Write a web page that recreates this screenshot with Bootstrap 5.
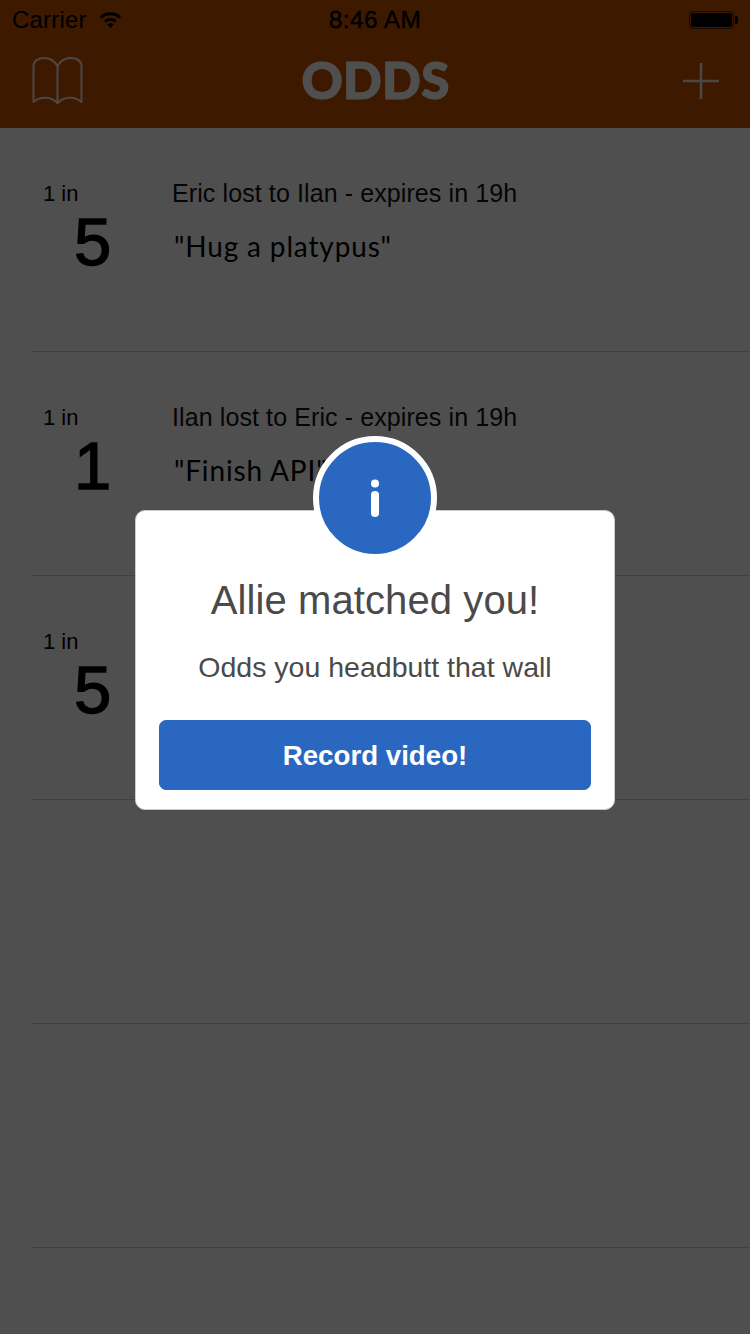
<!DOCTYPE html>
<html lang="en">
<head>
    <meta charset="UTF-8">
    <title>Odds</title>
    <link href="https://cdn.jsdelivr.net/npm/bootstrap@5.3.0/dist/css/bootstrap.min.css" rel="stylesheet">
    <style>
        html, body {
            height: 1334px;
            overflow: hidden;
        }

        body {
            background: #fff;
            color: #000;
            font-family: "Liberation Sans", Arial, sans-serif;
        }

        .app-header {
            height: 128px;
            background: #c55100;
            color: #fff;
        }

        .status-bar {
            height: 40px;
            padding: 0 11px 0 12px;
            font-size: 24px;
            line-height: 40px;
            letter-spacing: 0.2px;
        }

        .status-wifi {
            margin-left: 12px;
        }

        .status-time {
            font-size: 24.5px;
            letter-spacing: 0.4px;
            -webkit-text-stroke: 0.4px #000;
        }

        .title-bar {
            height: 88px;
            padding: 0 31px 7px 32px;
        }

        .title-side {
            width: 51px;
        }

        .app-title {
            margin-top: -2px;
            font-family: Lato, sans-serif;
            font-weight: 900;
            font-size: 51px;
            letter-spacing: 0.2px;
            line-height: 1;
            -webkit-text-stroke: 1.2px #fff;
        }

        .odds-row {
            height: 224px;
            margin-left: 32px;
            padding: 50px 0 0 11px;
            border-bottom: 1px solid #d0d0d0;
        }

        .odds-side {
            width: 129px;
        }

        .odds-in {
            font-size: 22px;
            line-height: 31px;
        }

        .odds-num {
            padding-left: 31px;
            font-size: 67px;
            font-weight: 400;
            line-height: 66px;
            -webkit-text-stroke: 1.4px #000;
        }

        .odds-who {
            font-size: 25px;
            line-height: 30px;
            letter-spacing: 0.1px;
            color: #111;
        }

        .odds-dare {
            margin-top: 20px;
            padding-left: 2px;
            font-family: Lato, sans-serif;
            font-size: 28px;
            line-height: 36px;
            letter-spacing: 0.85px;
        }

        .dim-layer {
            position: fixed;
            inset: 0;
            background: rgba(0, 0, 0, 0.69);
        }

        .match-box {
            position: absolute;
            left: 135px;
            top: 510px;
            width: 480px;
            height: 300px;
            padding: 63px 24px 0;
            background: #fff;
            border: 1px solid #ccc;
            border-radius: 10px;
            color: #4a4a4a;
            text-align: center;
        }

        .match-badge {
            position: absolute;
            left: 50%;
            top: -75px;
            width: 124px;
            height: 124px;
            margin-left: -62px;
            background: #2a67c0;
            border: 6px solid #fff;
            border-radius: 50%;
        }

        .match-title {
            margin: 0;
            font-size: 40px;
            font-weight: 400;
            line-height: 52px;
            letter-spacing: 0.1px;
            white-space: nowrap;
        }

        .match-text {
            margin: 23px 0 0;
            font-size: 28.5px;
            line-height: 36px;
            white-space: nowrap;
        }

        .btn-record {
            --bs-btn-bg: #2a67c0;
            --bs-btn-border-color: #2a67c0;
            --bs-btn-hover-bg: #245aa8;
            --bs-btn-hover-border-color: #245aa8;
            --bs-btn-color: #fff;
            --bs-btn-hover-color: #fff;
            display: block;
            width: 432px;
            height: 70px;
            margin: 35px 0 0 -1px;
            padding-top: 7px;
            border-radius: 7px;
            font-size: 27.7px;
            font-weight: 700;
            line-height: 56px;
        }
    </style>
</head>
<body>

<!-- Header -->
<header class="app-header">
    <div class="status-bar d-flex align-items-center justify-content-between position-relative text-black">
        <div class="d-flex align-items-center">
            <span>Carrier</span>
            <svg class="status-wifi" width="23" height="18" viewBox="0 0 22 18">
                <path d="M1.5 6.5 C6.5 1.5 15.5 1.5 20.5 6.5" fill="none" stroke="#000" stroke-width="2.8"/>
                <path d="M5.5 10.5 C8.5 7.8 13.5 7.8 16.5 10.5" fill="none" stroke="#000" stroke-width="2.8"/>
                <path d="M7.8 13.3 C9.8 12 12.2 12 14.2 13.3 L11 17 Z" fill="#000"/>
            </svg>
        </div>
        <span class="status-time position-absolute top-0 start-50 translate-middle-x">8:46 AM</span>
        <svg width="50" height="18" viewBox="0 0 50 18">
            <rect x="0.5" y="0.5" width="44" height="17" rx="3" fill="none" stroke="#000" stroke-opacity=".6"/>
            <rect x="2" y="2" width="41" height="14" rx="2" fill="#000"/>
            <path d="M46 5 h1 a2 2 0 0 1 2 2 v4 a2 2 0 0 1 -2 2 h-1 Z" fill="#000"/>
        </svg>
    </div>
    <div class="title-bar d-flex align-items-center justify-content-between">
        <div class="title-side">
            <svg class="d-block" width="51" height="48" viewBox="0 0 51 48" fill="none" stroke="#fff" stroke-opacity=".85" stroke-width="2" stroke-linejoin="round">
                <path d="M25.5 9 C22 3 16 1 12 1 C6 1 1.5 4 1.5 9 V45 C8 39 20 39 25.5 46.5 C31 39 43 39 49.5 45 V9 C49.5 4 45 1 39 1 C35 1 29 3 25.5 9 Z"/>
                <path d="M25.5 9 V46"/>
            </svg>
        </div>
        <div class="app-title">ODDS</div>
        <div class="title-side d-flex justify-content-end">
            <svg class="d-block" width="36" height="36" viewBox="0 0 36 36" stroke="#fff" stroke-opacity=".85" stroke-width="2.5">
                <path d="M18 0 V36 M0 18 H36"/>
            </svg>
        </div>
    </div>
</header>

<!-- Odds list -->
<main>
    <div class="odds-row d-flex">
        <div class="odds-side">
            <div class="odds-in">1 in</div>
            <div class="odds-num">5</div>
        </div>
        <div>
            <div class="odds-who">Eric lost to Ilan - expires in 19h</div>
            <div class="odds-dare">"Hug a platypus"</div>
        </div>
    </div>
    <div class="odds-row d-flex">
        <div class="odds-side">
            <div class="odds-in">1 in</div>
            <div class="odds-num">1</div>
        </div>
        <div>
            <div class="odds-who">Ilan lost to Eric - expires in 19h</div>
            <div class="odds-dare">"Finish API"</div>
        </div>
    </div>
    <div class="odds-row d-flex">
        <div class="odds-side">
            <div class="odds-in">1 in</div>
            <div class="odds-num">5</div>
        </div>
    </div>
    <div class="odds-row"></div>
    <div class="odds-row"></div>
</main>

<!-- Dimmed alert -->
<div class="dim-layer">
    <div class="match-box">
        <div class="match-badge d-flex align-items-center justify-content-center">
            <svg width="10" height="38" viewBox="0 0 10 38" fill="#fff">
                <circle cx="5" cy="4.5" r="4"/>
                <rect x="1" y="12" width="8" height="26" rx="4"/>
            </svg>
        </div>
        <h2 class="match-title">Allie matched you!</h2>
        <p class="match-text">Odds you headbutt that wall</p>
        <button type="button" class="btn btn-record">Record video!</button>
    </div>
</div>

<script src="https://cdn.jsdelivr.net/npm/bootstrap@5.3.0/dist/js/bootstrap.bundle.min.js"></script>
</body>
</html>
